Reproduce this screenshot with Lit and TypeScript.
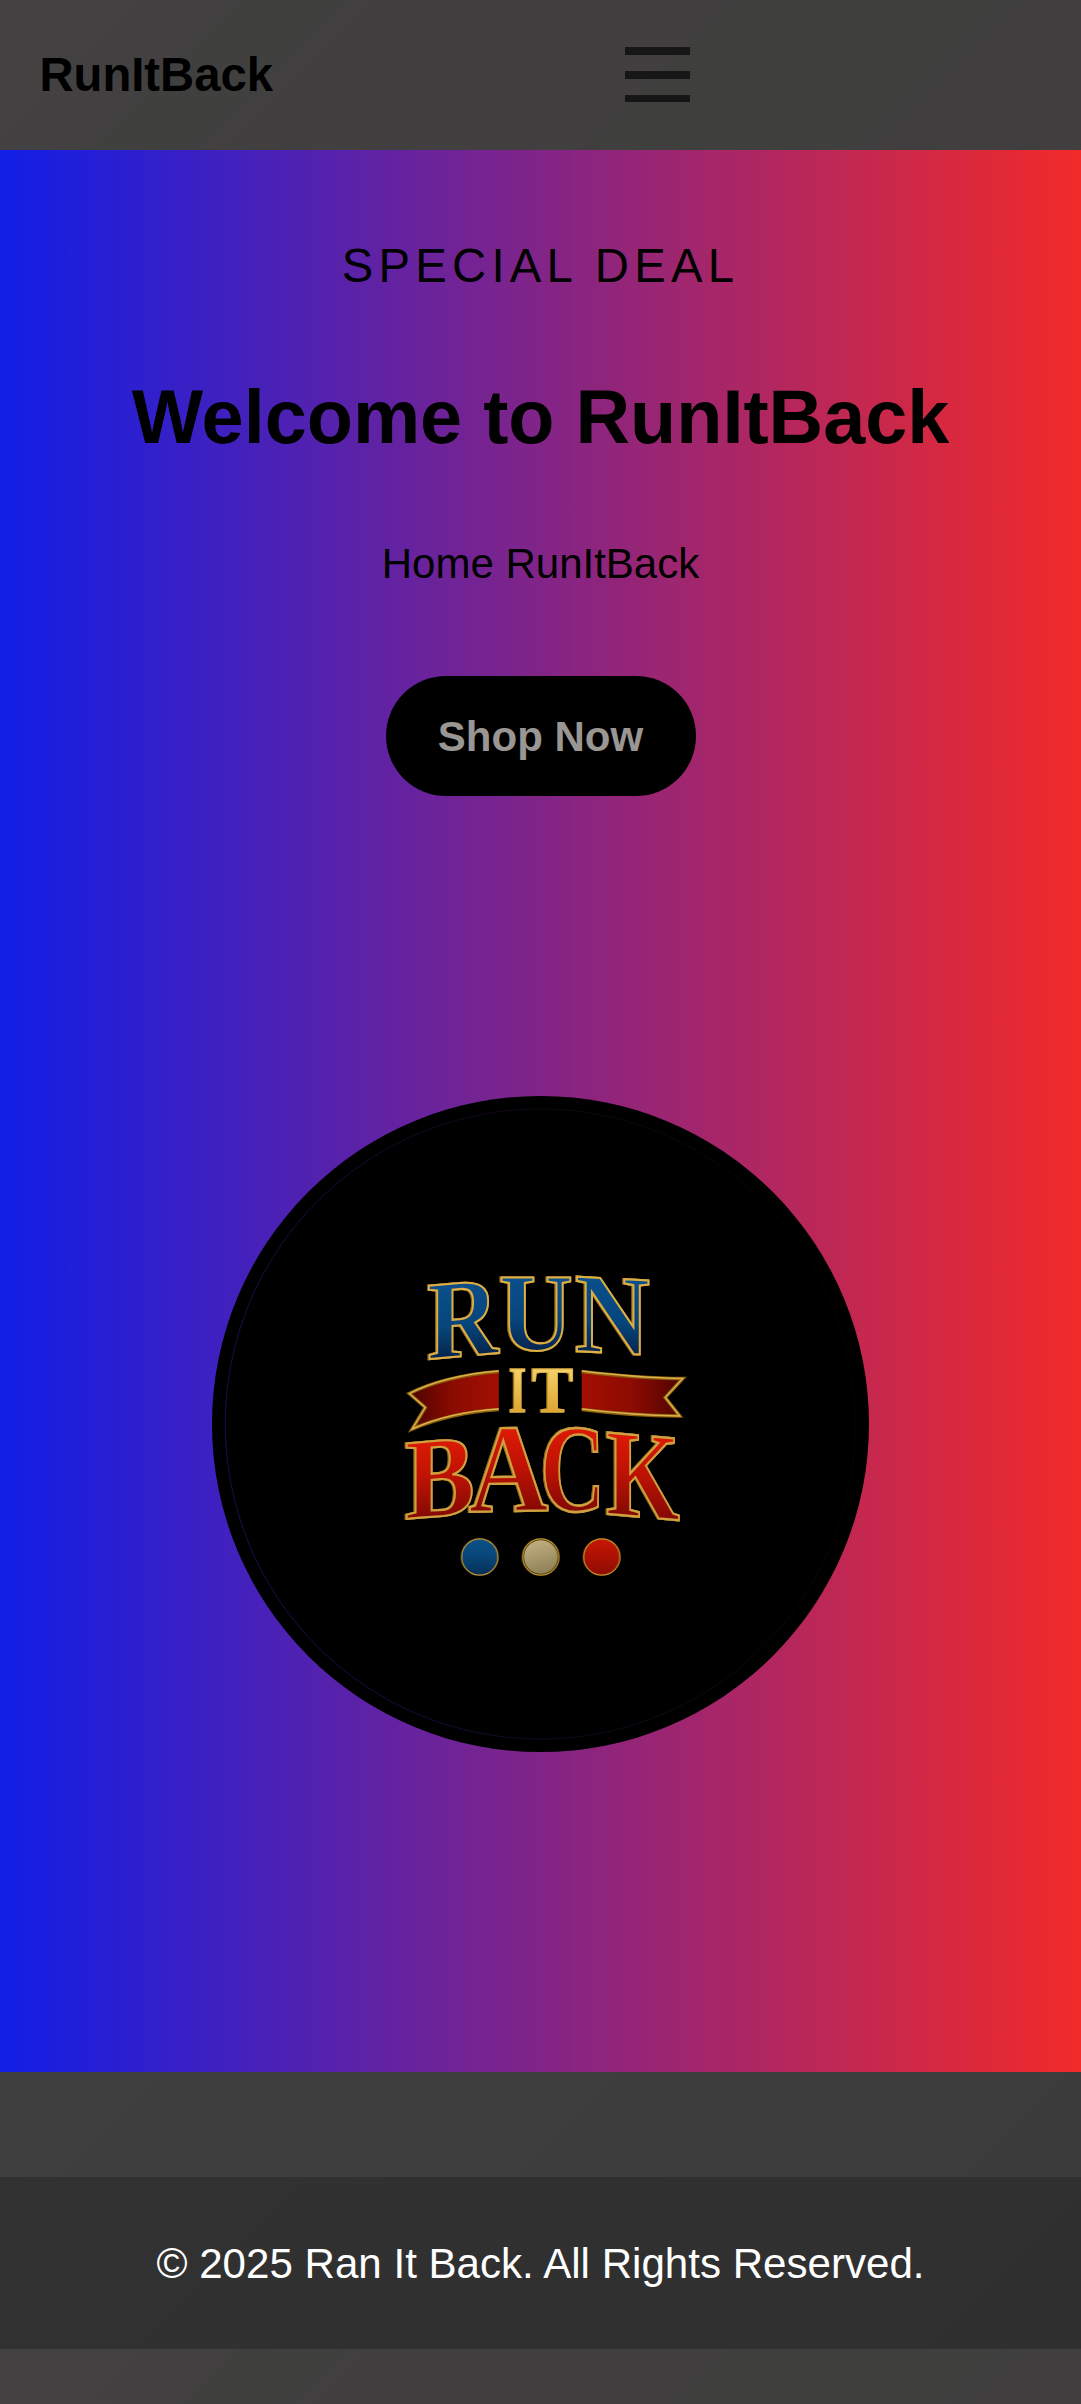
import { LitElement, html, svg, css } from "lit";
import { customElement } from "lit/decorators.js";

interface Glyph {
  char: string;
  // horizontal ink extent of the glyph in a 100-unit em
  ink: [number, number];
  x0: number;
  x1: number;
  top: number;
  base: number;
  skew: number;
  tone: "blue" | "red" | "gold";
}

const GLYPHS: Glyph[] = [
  { char: "R", ink: [2.6, 71.5], x0: 430, x1: 498, top: 1282, base: 1356, skew: -5, tone: "blue" },
  { char: "U", ink: [1.6, 70.1], x0: 501, x1: 571, top: 1277, base: 1350, skew: 0, tone: "blue" },
  { char: "N", ink: [1.6, 70.1], x0: 577, x1: 648, top: 1278, base: 1353, skew: 3, tone: "blue" },
  { char: "I", ink: [2, 37], x0: 510, x1: 526, top: 1369, base: 1412, skew: 0, tone: "gold" },
  { char: "T", ink: [3.1, 63.6], x0: 534, x1: 572, top: 1369, base: 1412, skew: 0, tone: "gold" },
  { char: "B", ink: [1.6, 61.9], x0: 407, x1: 470, top: 1440, base: 1516, skew: -5, tone: "red" },
  { char: "A", ink: [0.9, 68.9], x0: 470, x1: 545, top: 1428, base: 1511, skew: -1, tone: "red" },
  { char: "C", ink: [2.8, 68.5], x0: 543, x1: 602, top: 1429, base: 1511, skew: 0, tone: "red" },
  { char: "K", ink: [3, 76.9], x0: 609, x1: 679, top: 1435, base: 1517, skew: 5, tone: "red" },
];

@customElement("brand-emblem")
export class BrandEmblem extends LitElement {
  static styles = css`
    :host {
      display: block;
      width: 100%;
      height: 100%;
    }
    svg {
      display: block;
      width: 100%;
      height: 100%;
    }
    .glyphs {
      filter: drop-shadow(0.7px 0 0 #8a6614) drop-shadow(-0.7px 0.5px 0 #8a6614);
    }
    .glyph {
      font-family: "Liberation Serif", serif;
      font-weight: 700;
      font-size: 100px;
    }
    .blue {
      fill: url(#blue);
      stroke: #dcae45;
      stroke-width: 1.9px;
    }
    .red {
      fill: url(#red);
      stroke: #cfa040;
      stroke-width: 1.9px;
    }
    .gold {
      fill: url(#gold);
      stroke: #d9b04c;
      stroke-width: 1.2px;
    }
    .edge-dark {
      fill: none;
      stroke: #8a5f0e;
      stroke-width: 3.6px;
    }
    .edge {
      fill: none;
      stroke: #dcb04a;
      stroke-width: 1.4px;
    }
  `;

  private glyph(g: Glyph) {
    const sx = (g.x1 - g.x0) / (g.ink[1] - g.ink[0]);
    const sy = (g.base - g.top) / 66;
    const mid = (g.x0 + g.x1) / 2;
    const half = (g.ink[0] + g.ink[1]) / 2;
    const t = `translate(${mid} ${g.base}) skewY(${g.skew}) scale(${sx} ${sy}) translate(${-half} 0)`;
    return svg`
      <g class="glyph" transform=${t}>
        <text class=${g.tone}>${g.char}</text>
      </g>`;
  }

  render() {
    return html`
      <svg viewBox="212.5 1096 656 656" role="img" aria-label="Run It Back">
        <defs>
          <linearGradient id="blue" x1="0" y1="0" x2="0" y2="1">
            <stop offset="0.2" stop-color="#0a4f8c" />
            <stop offset="0.55" stop-color="#07467c" />
            <stop offset="0.85" stop-color="#041f46" />
          </linearGradient>
          <linearGradient id="red" x1="0" y1="0" x2="0" y2="1">
            <stop offset="0.2" stop-color="#de1a05" />
            <stop offset="0.5" stop-color="#bd1204" />
            <stop offset="0.85" stop-color="#7c0803" />
          </linearGradient>
          <linearGradient id="gold" x1="0" y1="0" x2="0" y2="1">
            <stop offset="0.2" stop-color="#f5d26a" />
            <stop offset="0.8" stop-color="#dfa531" />
          </linearGradient>
          <linearGradient id="ribbonLeft">
            <stop offset="0" stop-color="#4d0400" />
            <stop offset="0.5" stop-color="#8c0b02" />
            <stop offset="1" stop-color="#a30f02" />
          </linearGradient>
          <linearGradient id="ribbonRight">
            <stop offset="0" stop-color="#a30f02" />
            <stop offset="0.5" stop-color="#8c0b02" />
            <stop offset="1" stop-color="#4d0400" />
          </linearGradient>
          <linearGradient id="dotBlue" x1="0" y1="0" x2="0" y2="1">
            <stop offset="0" stop-color="#0b5089" />
            <stop offset="0.5" stop-color="#084678" />
            <stop offset="1" stop-color="#052f58" />
          </linearGradient>
          <linearGradient id="dotCream" x1="0" y1="0" x2="0.3" y2="1">
            <stop offset="0" stop-color="#c4b484" />
            <stop offset="1" stop-color="#94845b" />
          </linearGradient>
          <linearGradient id="dotRed" x1="0" y1="0" x2="0" y2="1">
            <stop offset="0" stop-color="#c91704" />
            <stop offset="1" stop-color="#8e0c03" />
          </linearGradient>
          <linearGradient id="ring" x1="0" y1="0.6" x2="1" y2="0.4">
            <stop offset="0" stop-color="#1e1266" />
            <stop offset="0.5" stop-color="#1a0820" />
            <stop offset="1" stop-color="#0c0204" />
          </linearGradient>
        </defs>

        <circle cx="540.5" cy="1424" r="315" fill="none" stroke="url(#ring)" stroke-width="0.800" />

        <path fill="url(#ribbonLeft)" d="M499 1371.500Q445 1376 409.500 1393.500L425.500 1407.500L412.500 1429Q450 1413 499 1409.500Z" />
        <path class="edge-dark" d="M499 1371.500Q445 1376 409.500 1393.500L425.500 1407.500L412.500 1429Q450 1413 499 1409.500" />
        <path class="edge" d="M499 1371Q445 1375.500 409.500 1393.500L425.500 1407.500L412.500 1429Q450 1412 499 1409" />
        <path fill="url(#ribbonRight)" d="M582 1371.500Q640 1378.500 683 1378.500L665.500 1397.500L680 1416Q630 1415.500 582 1409.500Z" />
        <path class="edge-dark" d="M582 1371.500Q640 1378.500 683 1378.500L665.500 1397.500L680 1416Q630 1415.500 582 1409.500" />
        <path class="edge" d="M582 1371Q640 1378 683 1378.500L665.500 1397.500L680 1416Q630 1415 582 1409" />

        <g class="glyphs">${GLYPHS.map((g) => this.glyph(g))}</g>

        <circle cx="480" cy="1557" r="18.200" fill="url(#dotBlue)" stroke="#c79a2a" stroke-width="1.300" />
        <circle cx="541" cy="1557" r="18.200" fill="#3a2c0c" stroke="#c79a2a" stroke-width="1.300" />
        <circle cx="541" cy="1557" r="16.800" fill="url(#dotCream)" />
        <circle cx="602" cy="1557" r="18.200" fill="url(#dotRed)" stroke="#c79a2a" stroke-width="1.300" />
      </svg>
    `;
  }
}

@customElement("app-root")
export class AppRoot extends LitElement {
  static styles = css`
    :host {
      display: flex;
      flex-direction: column;
      height: 2404px;
      overflow: hidden;
      font-family: "Liberation Sans", Arial, sans-serif;
      color: #000;
      background: linear-gradient(
          135deg,
          #444142 0,
          #434041 164px,
          #40403f 167px,
          #40403f 235px,
          #423f40 260px,
          #423f40 514px,
          #3f3f3e 518px,
          #3f3f3e 700px,
          #413e3f 740px,
          #3f3f3f 1500px,
          #3b3b3b 100%
        )
        0 0 / 100% 2349px repeat-y;
    }
    .header {
      display: grid;
      grid-template-columns: 585.6px 65px;
      align-items: center;
      box-sizing: border-box;
      height: 150px;
      padding-left: 39.4px;
      flex: none;
    }
    .brand {
      font-size: 47.25px;
      font-weight: 700;
      line-height: 54px;
    }
    .menu {
      display: flex;
      flex-direction: column;
      gap: 16px;
      padding: 0 0 1px;
      border: 0;
      background: none;
    }
    .bar {
      height: 8px;
      background: #161616;
    }
    .bar:last-child {
      height: 7px;
    }
    .hero {
      display: flex;
      flex-direction: column;
      align-items: center;
      box-sizing: border-box;
      height: 1922px;
      padding-top: 89px;
      flex: none;
      background: linear-gradient(90deg, #111ee6, #f22a29);
    }
    .eyebrow {
      margin: 0;
      font-size: 47.25px;
      line-height: 54px;
      letter-spacing: 5.25px;
    }
    .title {
      margin: 79.5px 0 0;
      font-size: 75.6px;
      line-height: 88px;
      white-space: nowrap;
    }
    .tagline {
      margin: 79.5px 0 0;
      font-size: 42px;
      line-height: 48px;
    }
    .cta {
      margin-top: 88px;
      width: 310px;
      height: 120px;
      padding: 2px 0 0;
      flex: none;
      border: 0;
      border-radius: 60px;
      background: #000;
      color: #999693;
      font: 700 42px/48px "Liberation Sans", Arial, sans-serif;
    }
    .emblem {
      box-sizing: border-box;
      width: 656.5px;
      height: 656px;
      margin-top: 300px;
      flex: none;
      border-radius: 50%;
      background: #000;
    }
    .footer {
      display: flex;
      align-items: center;
      justify-content: center;
      box-sizing: border-box;
      height: 172px;
      margin-top: 105px;
      padding-top: 2px;
      flex: none;
      background: rgba(0, 0, 0, 0.2);
      color: #fff;
      font-size: 42.1px;
      line-height: 48px;
    }
  `;

  render() {
    return html`
      <header class="header">
        <div class="brand">RunItBack</div>
        <button class="menu" aria-label="Menu">
          <span class="bar"></span>
          <span class="bar"></span>
          <span class="bar"></span>
        </button>
      </header>
      <main class="hero">
        <p class="eyebrow">SPECIAL DEAL</p>
        <h1 class="title">Welcome to RunItBack</h1>
        <p class="tagline">Home RunItBack</p>
        <button class="cta">Shop Now</button>
        <div class="emblem"><brand-emblem></brand-emblem></div>
      </main>
      <footer class="footer">© 2025 Ran It Back. All Rights Reserved.</footer>
    `;
  }
}
